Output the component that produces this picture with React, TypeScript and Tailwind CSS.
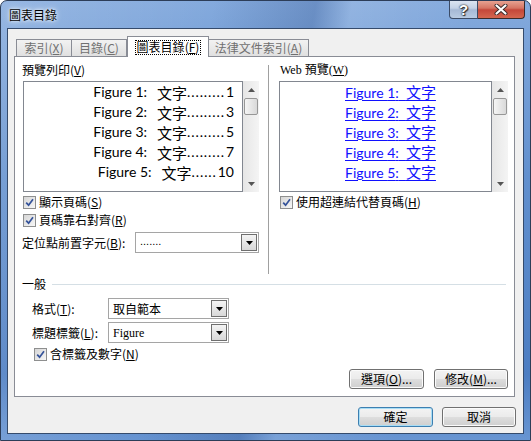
import React from 'react'

const cjk = "font-['Noto_Sans_CJK_TC',sans-serif]"
const serif = "font-['Liberation_Serif','Noto_Sans_CJK_TC',serif]"
const latin = "font-['Lato','Noto_Sans_CJK_TC',sans-serif]"

const Tri = ({ up = false, color = '#000' }: { up?: boolean; color?: string }) => (
  <svg width="7" height="4" viewBox="0 0 7 4">
    <path d={up ? 'M0 4 L3.5 0 L7 4 Z' : 'M0 0 L7 0 L3.5 4 Z'} fill={color} />
  </svg>
)

const Key = ({ k }: { k: string }) => (
  <>
    (<span className="underline">{k}</span>)
  </>
)

const Check = ({ children, className = '' }: { children: React.ReactNode; className?: string }) => (
  <div className={`flex items-center h-[14px] ${className}`}>
    <span className="w-[13px] h-[13px] border border-[#8e8f8f] bg-linear-to-br from-[#d6d6d6] to-[#f7f7f7] flex items-center justify-center">
      <svg width="9" height="9" viewBox="0 0 9 9">
        <path d="M1.2 4.6 L3.6 7.2 L8 1.2" stroke="#35539a" strokeWidth="1.7" fill="none" />
      </svg>
    </span>
    <span className="ml-[3px]">{children}</span>
  </div>
)

const Combo = ({ text, className = '', font = '' }: { text: string; className?: string; font?: string }) => (
  <div className={`flex h-[21px] border border-[#a5a5a5] bg-white ${className}`}>
    <div className={`flex-1 pl-[4px] flex items-center ${font}`}>{text}</div>
    <div className="w-[16px] m-px flex items-center justify-center border border-[#6f6f6f] bg-linear-to-b from-[#f4f4f4] to-[#d8d8d8]">
      <Tri />
    </div>
  </div>
)

const Btn = ({ children, className = '', def = false }: { children: React.ReactNode; className?: string; def?: boolean }) => (
  <div
    className={`h-[20px] rounded-[3px] border flex items-center justify-center bg-[linear-gradient(#f3f3f3,#ebebeb_48%,#dddddd_52%,#cfcfcf)] ${
      def ? 'border-[#3c7fb1] shadow-[inset_0_0_0_1px_#a8ddf5]' : 'border-[#707070] shadow-[inset_0_0_0_1px_#fbfbfb]'
    } ${className}`}
  >
    {children}
  </div>
)

const Scroll = () => (
  <div className="w-[16px] h-[111px] bg-linear-to-r from-[#e6e6e6] to-[#f4f4f4] flex flex-col items-center">
    <div className="h-[17px] flex items-center justify-center">
      <Tri up color="#555" />
    </div>
    <div className="w-[14px] h-[17px] rounded-[2px] border border-[#979797] bg-linear-to-r from-[#f5f5f5] to-[#d9d9d9]" />
    <div className="flex-1" />
    <div className="h-[17px] flex items-center justify-center">
      <Tri color="#555" />
    </div>
  </div>
)

const printRows = [
  { n: 1, dots: '.........', p: '1' },
  { n: 2, dots: '.........', p: '3' },
  { n: 3, dots: '.........', p: '5' },
  { n: 4, dots: '.........', p: '7' },
  { n: 5, dots: '......', p: '10' },
]

export default function App() {
  return (
    <div
      className={`w-[531px] h-[441px] overflow-hidden rounded-t-[7px] border border-[#2c3d58] text-[12px] text-black leading-none ${cjk} bg-[linear-gradient(100deg,rgba(255,255,255,0.16),rgba(255,255,255,0)_35%,rgba(20,50,110,0.22)_52%,rgba(255,255,255,0.12)_58%,rgba(255,255,255,0)_78%),linear-gradient(180deg,#84aadd,#6290ce_40%,#4c7dc2_85%,#6895d2)]`}
    >
      {/* title bar */}
      <div className="h-[27px] flex">
        <div className="flex-1 pl-[8px] flex items-center pt-[1px] text-[12px] [text-shadow:0_0_6px_#fff,0_0_3px_#fff]">
          圖表目錄
        </div>
        <div className="flex mr-[5px] h-[19px] -mt-px">
          <div className="w-[29px] h-full rounded-bl-[4px] border border-t-0 border-[#3b4b66] bg-[linear-gradient(#dfe7f2,#c4d2e6_45%,#a6b9d5_55%,#b9cbe2)] flex items-center justify-center">
            <span className="font-['Liberation_Sans',sans-serif] font-bold text-[15px] text-white [text-shadow:0_0_1px_#222,0_0_2px_#222,1px_1px_1px_#333]">?</span>
          </div>
          <div className="w-[47px] h-full rounded-br-[4px] border border-t-0 border-l-0 border-[#3b2a2a] bg-[linear-gradient(#eaa898,#d67463_45%,#c4473a_55%,#d4664f)] flex items-center justify-center">
            <svg width="14" height="11" viewBox="0 0 14 11">
              <path d="M2.5 1.5 L11.5 9.5 M11.5 1.5 L2.5 9.5" stroke="#3a2a2a" strokeWidth="4" strokeLinecap="round" />
              <path d="M2.5 1.5 L11.5 9.5 M11.5 1.5 L2.5 9.5" stroke="#fff" strokeWidth="2.2" strokeLinecap="round" />
            </svg>
          </div>
        </div>
      </div>

      {/* client area */}
      <div className="ml-[6px] w-[517px] h-[406px] border border-[#354b6c] bg-[#f0f0f0] pl-[6px] pt-[7px]">
        {/* tabs */}
        <div className="flex items-end h-[20px] ml-[2px]">
          <div className="w-[56px] h-[17px] border border-b-0 border-[#898c95] bg-linear-to-b from-[#f2f2f2] to-[#e0e0e0] flex items-center justify-center text-[#707070]">
            索引<Key k="X" />
          </div>
          <div className="w-[55px] h-[17px] border border-b-0 border-l-0 border-[#898c95] bg-linear-to-b from-[#f2f2f2] to-[#e0e0e0] flex items-center justify-center text-[#707070]">
            目錄<Key k="C" />
          </div>
          <div className="w-[82px] h-[21px] -mb-px relative z-10 border border-b-0 border-[#898c95] bg-white flex items-center justify-center">
            <span className="border border-dotted border-black px-[1px] h-[15px] flex items-center">
              圖表目錄<Key k="F" />
            </span>
          </div>
          <div className="w-[100px] h-[17px] border border-b-0 border-l-0 border-[#898c95] bg-linear-to-b from-[#f2f2f2] to-[#e0e0e0] flex items-center justify-center text-[#707070]">
            法律文件索引<Key k="A" />
          </div>
        </div>

        {/* tab panel */}
        <div className="w-[501px] h-[341px] border border-[#898c95] bg-white">
          <div className="flex h-[217px]">
            {/* print preview */}
            <div className="w-[253px] pl-[8px] pt-[5px]">
              <div className="h-[16px] flex items-center -ml-px">
                預覽列印<Key k="V" />
              </div>
              <div className="flex mt-[3px]">
                <div className="w-[220px] h-[111px] border border-[#828790] bg-white">
                  {printRows.map((r) => (
                    <div key={r.n} className={`h-[20px] flex items-center justify-end pr-[8px] text-[14px] ${latin}`}>
                      <span>Figure {r.n}:</span>
                      <span className={`ml-[10px] text-[15px] ${cjk}`}>文字</span>
                      <span className="tracking-[0.9px]">{r.dots}</span>
                      <span className="ml-[1px]">{r.p}</span>
                    </div>
                  ))}
                </div>
                <Scroll />
              </div>
              <Check className="mt-[3px]">
                顯示頁碼<Key k="S" />
              </Check>
              <Check className="mt-[4px]">
                頁碼靠右對齊<Key k="R" />
              </Check>
              <div className="flex items-center mt-[5px] -ml-px">
                <div className="w-[113px]">
                  定位點前置字元<Key k="B" />:
                </div>
                <Combo text="......." className="w-[124px]" font="font-['Liberation_Sans',sans-serif] text-[11px] pb-[3px]" />
              </div>
            </div>

            <div className="w-px h-[209px] mt-[8px] bg-[#a0a0a0]" />

            {/* web preview */}
            <div className="flex-1 pl-[10px] pt-[5px]">
              <div className={`h-[16px] flex items-center ml-px ${serif} text-[12px]`}>
                Web 預覽<Key k="W" />
              </div>
              <div className="flex mt-[3px]">
                <div className="w-[213px] h-[111px] border border-[#828790] bg-white">
                  {printRows.map((r) => (
                    <div key={r.n} className={`h-[20px] flex items-center pl-[65px] text-[14px] text-[#1010ff] ${latin}`}>
                      <span className="underline underline-offset-[2px]">
                        Figure {r.n}:{'\u00a0\u00a0'}
                        <span className={`text-[15px] ${cjk}`}>文字</span>
                      </span>
                    </div>
                  ))}
                </div>
                <Scroll />
              </div>
              <Check className="mt-[3px] ml-px">
                使用超連結代替頁碼<Key k="H" />
              </Check>
            </div>
          </div>

          {/* general */}
          <div className="flex items-center h-[14px] mt-[3px] pl-[7px]">
            <span>一般</span>
            <div className="flex-1 h-px bg-[#d5dfe5] ml-[6px] mr-[8px]" />
          </div>
          <div className="flex items-center mt-[7px] pl-[17px]">
            <div className="w-[76px]">
              格式<Key k="T" />:
            </div>
            <Combo text="取自範本" className="w-[121px]" />
          </div>
          <div className="flex items-center mt-[3px] pl-[17px]">
            <div className="w-[76px]">
              標題標籤<Key k="L" />:
            </div>
            <Combo text="Figure" className="w-[121px]" font={`${serif} text-[12px]`} />
          </div>
          <Check className="mt-[4px] ml-[19px]">
            含標籤及數字<Key k="N" />
          </Check>
          <div className="flex justify-end gap-[10px] mt-[8px] pr-[6px]">
            <Btn className="w-[75px]">
              選項<Key k="O" />...
            </Btn>
            <Btn className="w-[74px]">
              修改<Key k="M" />...
            </Btn>
          </div>
        </div>

        {/* dialog buttons */}
        <div className="flex justify-end gap-[9px] mt-[10px] pr-[7px]">
          <Btn def className="w-[75px]">
            確定
          </Btn>
          <Btn className="w-[74px]">取消</Btn>
        </div>
      </div>
    </div>
  )
}
